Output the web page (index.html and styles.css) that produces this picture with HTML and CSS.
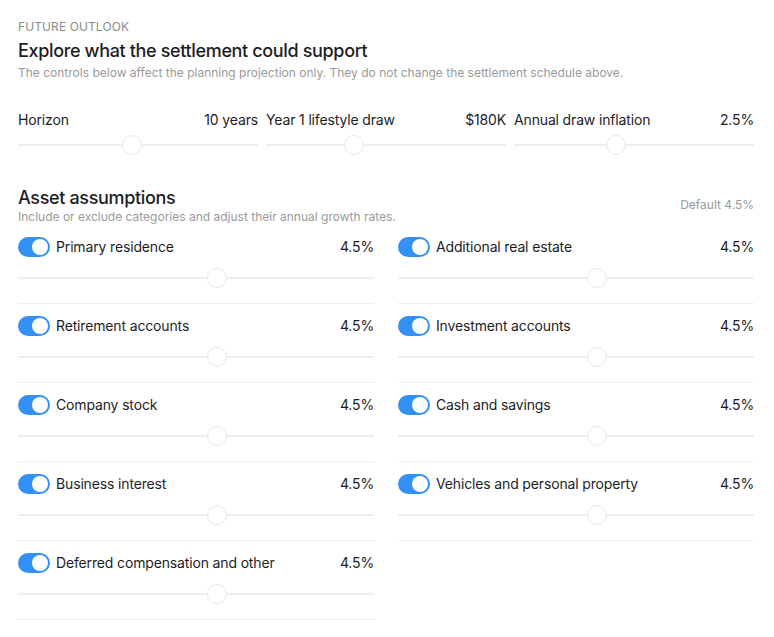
FILE: index.html
```html
<!DOCTYPE html>
<html lang="en">
<head>
    <meta charset="UTF-8">
    <meta name="viewport" content="width=device-width, initial-scale=1.0">
    <title>Future outlook</title>
    <link rel="stylesheet" href="styles.css">
</head>
<body>
    <div class="panel">
        <div class="eyebrow">FUTURE OUTLOOK</div>
        <h2 class="title">Explore what the settlement could support</h2>
        <p class="note">The controls below affect the planning projection only. They do not change the settlement schedule above.</p>

        <!-- planning controls -->
        <div class="controls">
            <div class="control">
                <div class="row"><span>Horizon</span><span>10 years</span></div>
                <input class="slider" type="range" min="1" max="20" value="10">
            </div>
            <div class="control">
                <div class="row"><span>Year 1 lifestyle draw</span><span>$180K</span></div>
                <input class="slider" type="range" min="60" max="400" value="180">
            </div>
            <div class="control">
                <div class="row"><span>Annual draw inflation</span><span>2.5%</span></div>
                <input class="slider" type="range" min="0" max="6" step="0.1" value="2.5">
            </div>
        </div>

        <!-- asset assumptions -->
        <div class="assets-head">
            <div>
                <h3 class="subtitle">Asset assumptions</h3>
                <p class="note flush">Include or exclude categories and adjust their annual growth rates.</p>
            </div>
            <span class="default">Default 4.5%</span>
        </div>

        <div class="assets" id="assets"></div>
    </div>

    <script>
        const assets = [
            'Primary residence', 'Additional real estate',
            'Retirement accounts', 'Investment accounts',
            'Company stock', 'Cash and savings',
            'Business interest', 'Vehicles and personal property',
            'Deferred compensation and other'
        ];

        document.getElementById('assets').innerHTML = assets.map(name => `
            <div class="asset">
                <div class="row">
                    <label class="item">
                        <input type="checkbox" class="toggle" checked>
                        <span>${name}</span>
                    </label>
                    <span>4.5%</span>
                </div>
                <input class="slider" type="range" min="0" max="8" step="0.1" value="4.5">
            </div>`).join('');
    </script>
</body>
</html>
```

FILE: styles.css
```css
body {
    font-family: Inter, "Noto Sans", sans-serif;
    margin: 0;
    background: #fff;
    color: #1d1d1f;
}
.panel {
    padding: 19px 20px 0 18px;
}
.eyebrow {
    font-size: 12px;
    color: #8a8a8a;
    letter-spacing: 0.1px;
    line-height: 16px;
}
.title {
    font-size: 18px;
    font-weight: 500;
    letter-spacing: -0.35px;
    margin: 5px 0 0;
    line-height: 22px;
}
.note {
    font-size: 12px;
    color: #9a9a9a;
    margin: 3px 0 0;
    line-height: 16px;
}
.note.flush {
    margin-top: 0;
}
.row {
    display: flex;
    justify-content: space-between;
    align-items: center;
    font-size: 14px;
    letter-spacing: -0.15px;
    line-height: 20px;
}
.controls {
    display: grid;
    grid-template-columns: repeat(3, 1fr);
    gap: 8px;
    margin-top: 29px;
}
.slider {
    -webkit-appearance: none;
    appearance: none;
    display: block;
    width: 100%;
    height: 20px;
    margin: 0;
    background: transparent;
}
.slider::-webkit-slider-runnable-track {
    height: 2px;
    background: #eeeeee;
    border-radius: 1px;
}
.slider::-webkit-slider-thumb {
    -webkit-appearance: none;
    width: 20px;
    height: 20px;
    margin-top: -9px;
    border-radius: 50%;
    background: #fff;
    border: 1px solid #e8e8e8;
    box-sizing: border-box;
}
.control .slider {
    margin-top: 5px;
}
.assets-head {
    display: flex;
    justify-content: space-between;
    align-items: flex-end;
    margin-top: 32px;
}
.subtitle {
    font-size: 18px;
    font-weight: 500;
    letter-spacing: -0.35px;
    margin: 0;
    line-height: 22px;
}
.default {
    font-size: 12px;
    color: #999;
    line-height: 16px;
    margin-bottom: 12px;
}
.assets {
    display: grid;
    grid-template-columns: 1fr 1fr;
    column-gap: 24px;
}
.asset {
    padding: 12px 0 15px;
    border-bottom: 1px solid #eeeeee;
}
.asset .slider {
    margin-top: 11px;
}
.item {
    display: flex;
    align-items: center;
    gap: 6px;
}
.toggle {
    -webkit-appearance: none;
    appearance: none;
    position: relative;
    width: 32px;
    height: 20px;
    margin: 0;
    border-radius: 10px;
    background: #3390f4;
}
.toggle::after {
    content: "";
    position: absolute;
    top: 2px;
    right: 2px;
    width: 16px;
    height: 16px;
    border-radius: 50%;
    background: #fff;
}
.toggle:not(:checked) {
    background: #d6d6d6;
}
.toggle:not(:checked)::after {
    right: auto;
    left: 2px;
}
```
